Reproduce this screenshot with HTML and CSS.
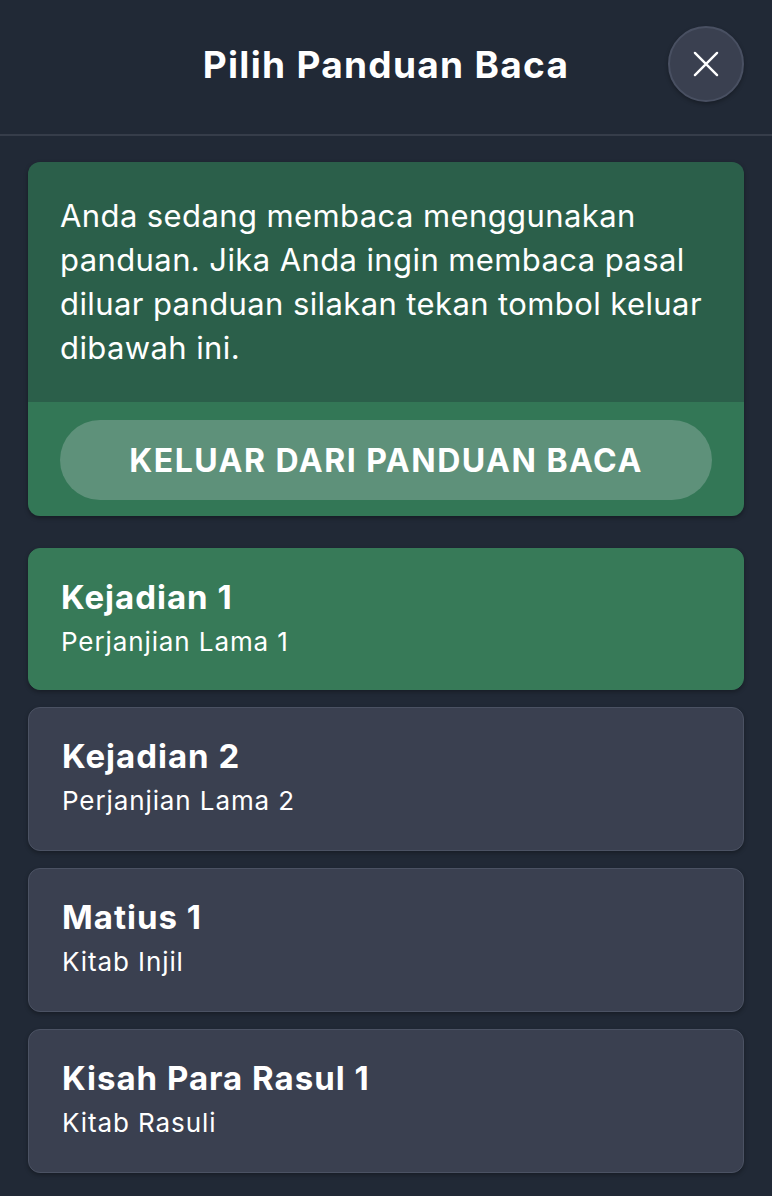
FILE: index.html
```html
<!DOCTYPE html>
<html lang="id">
<head>
<meta charset="utf-8">
<title>Pilih Panduan Baca</title>
<link rel="stylesheet" href="styles.css">
</head>
<body>
<div class="screen">
  <header class="header">
    <h1 class="title">Pilih Panduan Baca</h1>
    <button class="close" aria-label="Tutup">
      <svg width="38" height="38" viewBox="0 0 24 24" fill="none" stroke="#fff" stroke-width="1.5" stroke-linecap="round"><path d="M5 5 L19 19 M19 5 L5 19"/></svg>
    </button>
  </header>
  <main class="content">
    <section class="banner">
      <p class="banner-text">Anda sedang membaca menggunakan panduan. Jika Anda ingin membaca pasal diluar panduan silakan tekan tombol keluar dibawah ini.</p>
      <div class="banner-foot">
        <button class="exit">KELUAR DARI PANDUAN BACA</button>
      </div>
    </section>
    <ul class="list">
      <li class="item active"><div class="item-title">Kejadian 1</div><div class="item-sub">Perjanjian Lama 1</div></li>
      <li class="item"><div class="item-title">Kejadian 2</div><div class="item-sub">Perjanjian Lama 2</div></li>
      <li class="item"><div class="item-title">Matius 1</div><div class="item-sub">Kitab Injil</div></li>
      <li class="item"><div class="item-title">Kisah Para Rasul 1</div><div class="item-sub">Kitab Rasuli</div></li>
    </ul>
  </main>
</div>
</body>
</html>
```

FILE: styles.css
```css
* { box-sizing: border-box; }
html, body { margin: 0; padding: 0; }
body {
  background: #212936;
  font-family: Inter, "Noto Sans", sans-serif;
  color: #fff;
  width: 772px;
  height: 1196px;
  overflow: hidden;
}
.header {
  position: relative;
  height: 136px;
  border-bottom: 2px solid #363d4a;
  display: flex;
  align-items: center;
  justify-content: center;
  padding-bottom: 6px;
}
.title {
  margin: 0;
  font-size: 37px;
  font-weight: 700;
  letter-spacing: 1.3px;
}
.close {
  position: absolute;
  right: 28px;
  top: 26px;
  width: 76px;
  height: 76px;
  border-radius: 50%;
  background: #3a4050;
  border: 2px solid #495062;
  display: flex;
  align-items: center;
  justify-content: center;
  padding: 0;
  box-shadow: 0 2px 4px rgba(0,0,0,0.3);
}
.content {
  padding: 26px 28px 0;
  display: flex;
  flex-direction: column;
  gap: 32px;
}
.banner {
  border-radius: 12px;
  overflow: hidden;
  box-shadow: 0 2px 4px rgba(0,0,0,0.35);
}
.banner-text {
  margin: 0;
  background: #2b5f4a;
  padding: 32px;
  font-size: 31px;
  line-height: 44px;
  letter-spacing: 0.4px;
}
.banner-foot {
  background: #337756;
  padding: 18px 32px 16px;
}
.exit {
  width: 100%;
  height: 80px;
  border: none;
  border-radius: 40px;
  background: #5e917a;
  color: #fff;
  font-family: Inter, "Noto Sans", sans-serif;
  font-weight: 700;
  font-size: 32px;
  letter-spacing: 1.5px;
}
.list {
  list-style: none;
  margin: 0;
  padding: 0;
  display: flex;
  flex-direction: column;
  gap: 17px;
}
.item {
  background: #3a4050;
  border: 1px solid #4b5263;
  border-radius: 12px;
  padding: 26px 33px 30px;
  box-shadow: 0 2px 4px rgba(0,0,0,0.3);
}
.item.active {
  background: #377a58;
  border-color: #377a58;
  padding: 26px 32px 28px;
}
.item-title {
  font-size: 33px;
  font-weight: 700;
  line-height: 44px;
  letter-spacing: 1px;
}
.item-sub {
  margin-top: 4px;
  font-size: 26px;
  line-height: 38px;
  letter-spacing: 0.9px;
}
```
